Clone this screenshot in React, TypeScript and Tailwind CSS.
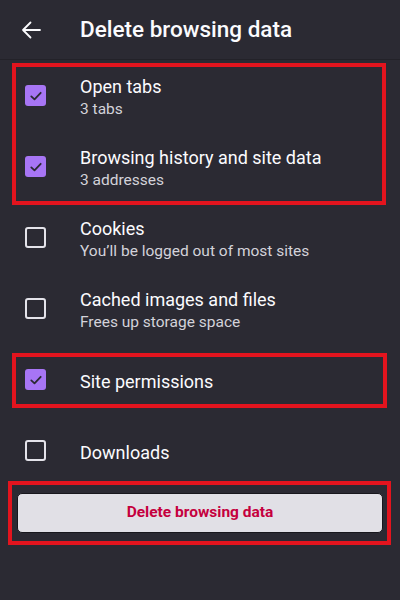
import React, { useState } from "react";

type Item = { id: string; title: string; sub?: string };

const ITEMS: Item[] = [
  { id: "tabs", title: "Open tabs", sub: "3 tabs" },
  { id: "history", title: "Browsing history and site data", sub: "3 addresses" },
  { id: "cookies", title: "Cookies", sub: "You\u2019ll be logged out of most sites" },
  { id: "cache", title: "Cached images and files", sub: "Frees up storage space" },
  { id: "perms", title: "Site permissions" },
  { id: "downloads", title: "Downloads" },
];

function Checkbox({ checked }: { checked: boolean }) {
  if (checked) {
    return (
      <div className="w-[21px] h-[21px] rounded-[3px] bg-[#a775f5] flex items-center justify-center shrink-0">
        <svg width="14" height="14" viewBox="0 0 14 14" fill="none">
          <path d="M2.3 7.4 L5.5 10.4 L11.7 3.8" stroke="#2b2a33" strokeWidth="1.8" strokeLinecap="round" strokeLinejoin="round" />
        </svg>
      </div>
    );
  }
  return <div className="w-[21px] h-[21px] rounded-[3px] border-2 border-[#e4e3ea] shrink-0" />;
}

function Row({ item, checked, onToggle }: { item: Item; checked: boolean; onToggle: () => void }) {
  return (
    <div className="h-[71px] flex items-center cursor-pointer" onClick={onToggle}>
      <div className="w-[80px] pl-[25px] flex items-center">
        <Checkbox checked={checked} />
      </div>
      <div className="flex flex-col pt-[3px]">
        <span className="text-[18px] leading-[23px] text-[#fbfbfe]">{item.title}</span>
        {item.sub && <span className="text-[15.5px] leading-[22px] text-[#d3d2da]">{item.sub}</span>}
      </div>
    </div>
  );
}

export default function App() {
  const [sel, setSel] = useState<Record<string, boolean>>({ tabs: true, history: true, perms: true });
  const toggle = (id: string) => setSel(s => ({ ...s, [id]: !s[id] }));
  const row = (i: number) => (
    <Row key={ITEMS[i].id} item={ITEMS[i]} checked={!!sel[ITEMS[i].id]} onToggle={() => toggle(ITEMS[i].id)} />
  );

  return (
    <div className="w-[400px] h-[600px] bg-[#2b2a33] overflow-hidden" style={{ fontFamily: "Roboto, 'Liberation Sans', sans-serif" }}>
      {/* Header */}
      <div className="h-[60px] flex items-center border-b border-[#232229]">
        <div className="w-[80px] pl-[20px] flex items-center">
          <svg width="22" height="22" viewBox="0 0 22 22" fill="none">
            <path d="M20 11 H3 M10.5 3.5 L3 11 L10.5 18.5" stroke="#fbfbfe" strokeWidth="1.8" strokeLinecap="round" strokeLinejoin="round" />
          </svg>
        </div>
        <h1 className="text-[22.5px] font-medium text-[#fbfbfe]">Delete browsing data</h1>
      </div>

      {/* Rows */}
      <div className="relative">
        {row(0)}
        {row(1)}
        <div className="absolute left-[12px] right-[14px] top-[3px] bottom-[-3px] border-4 border-[#e3141e] pointer-events-none" />
      </div>
      {row(2)}
      {row(3)}
      <div className="relative">
        {row(4)}
        <div className="absolute left-[12px] right-[13px] top-[9px] bottom-[7px] border-4 border-[#e3141e] pointer-events-none" />
      </div>
      {row(5)}

      {/* Button */}
      <div className="relative mt-[7px] px-[17px]">
        <button className="w-full h-[40px] rounded-[5px] bg-[#e1e0e6] border border-[#18171d] text-[#c5003e] text-[15.5px] font-bold">
          Delete browsing data
        </button>
        <div className="absolute left-[8px] right-[9px] top-[-12px] bottom-[-12px] border-4 border-[#e3141e] pointer-events-none" />
      </div>
    </div>
  );
}
